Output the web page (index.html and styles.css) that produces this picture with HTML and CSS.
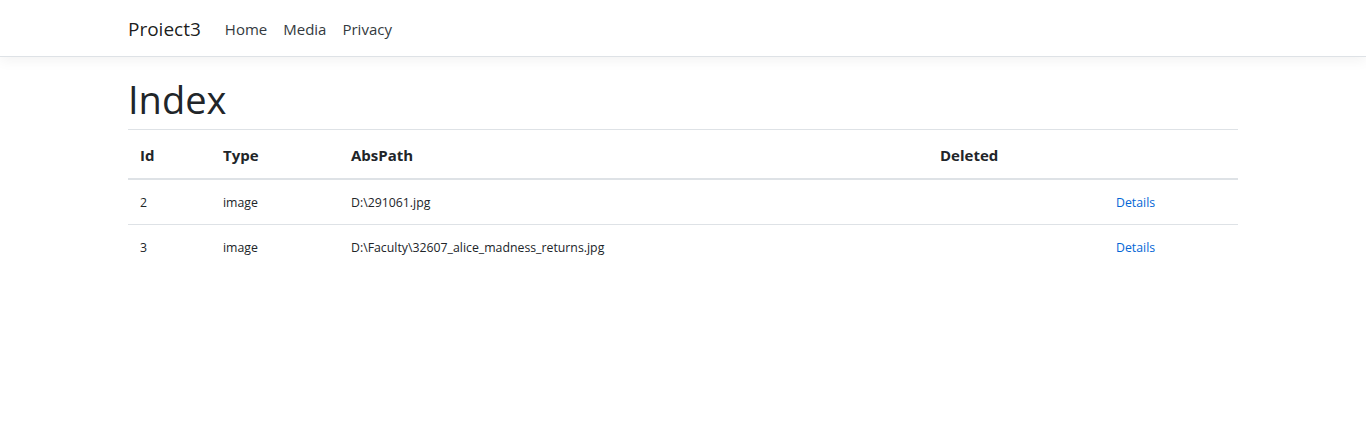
FILE: index.html
```html
<!DOCTYPE html>
<html lang="en">
<head>
<meta charset="utf-8">
<title>Index - Proiect3</title>
<link rel="stylesheet" href="styles.css">
</head>
<body>
<header class="navbar">
  <div class="container nav-inner">
    <a class="brand" href="#">Proiect3</a>
    <ul class="nav">
      <li><a class="nav-link" href="#">Home</a></li>
      <li><a class="nav-link" href="#">Media</a></li>
      <li><a class="nav-link" href="#">Privacy</a></li>
    </ul>
  </div>
</header>
<main class="container">
  <h1 class="title">Index</h1>
  <table class="table">
    <colgroup>
      <col class="c-id"><col class="c-type"><col class="c-path"><col class="c-del"><col class="c-act">
    </colgroup>
    <thead>
      <tr><th>Id</th><th>Type</th><th>AbsPath</th><th>Deleted</th><th></th></tr>
    </thead>
    <tbody>
      <tr><td>2</td><td>image</td><td>D:\291061.jpg</td><td></td><td><a class="link" href="#">Details</a></td></tr>
      <tr><td>3</td><td>image</td><td>D:\Faculty\32607_alice_madness_returns.jpg</td><td></td><td><a class="link" href="#">Details</a></td></tr>
    </tbody>
  </table>
</main>
</body>
</html>
```
FILE: styles.css
```css
* { box-sizing: border-box; }
html, body { margin: 0; padding: 0; background: #fff; }
body {
  font-family: "Segoe UI", "Open Sans", "Noto Sans", sans-serif;
  font-size: 16px;
  line-height: 1.5;
  color: #212529;
}
.container {
  width: 1140px;
  margin: 0 auto;
  padding: 0 15px;
}
.navbar {
  background: #fff;
  border-bottom: 1px solid #dee2e6;
  box-shadow: 0 4px 12px rgba(0,0,0,.05);
  padding: 9px 0 7px;
  margin-bottom: 16px;
}
.nav-inner { display: flex; align-items: center; }
.brand {
  font-size: 19px;
  line-height: 30px;
  padding: 5px 0;
  margin-right: 16px;
  color: rgba(0,0,0,.9);
  text-decoration: none;
}
.nav { display: flex; list-style: none; margin: 0; padding: 0; }
.nav-link {
  display: block;
  padding: 8px 8px;
  font-size: 15px;
  line-height: 24px;
  color: #343a40;
  text-decoration: none;
}
.title {
  font-size: 38px;
  font-weight: 400;
  line-height: 48px;
  padding-top: 2px;
  margin: 0 0 6px;
}
.table {
  width: 1110px;
  border-collapse: collapse;
  table-layout: fixed;
}
.c-id { width: 83px; }
.c-type { width: 128px; }
.c-path { width: 589px; }
.c-del { width: 176px; }
.c-act { width: 134px; }
.table th {
  text-align: left;
  font-size: 15px;
  font-weight: 700;
  line-height: 24px;
  padding: 13px 12px 11px;
  border-top: 1px solid #dee2e6;
  border-bottom: 2px solid #dee2e6;
}
.table td {
  font-size: 12.3px;
  line-height: 20px;
  padding: 13px 12px 11px;
  border-top: 1px solid #dee2e6;
  white-space: nowrap;
}
.table tbody tr:first-child td { border-top: none; }
.link { color: #0366d6; text-decoration: none; }
```
